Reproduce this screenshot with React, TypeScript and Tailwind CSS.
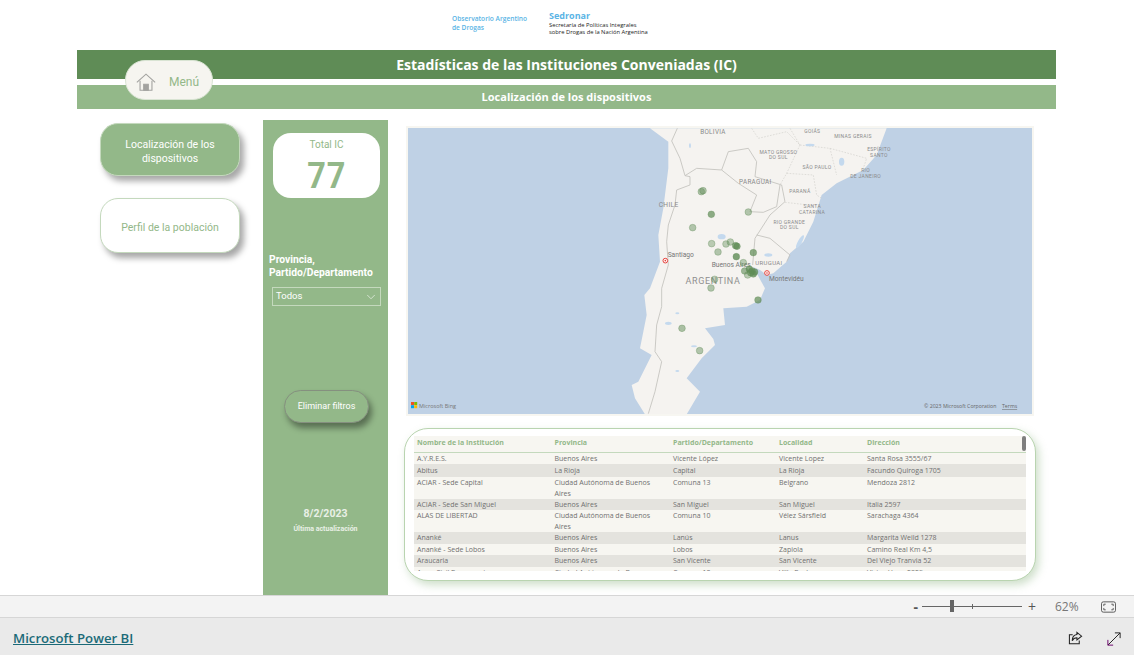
import { ChevronDown } from 'lucide-react'

const segoe = "font-['Open_Sans','Noto_Sans',sans-serif]"
const din = "font-['Roboto','Lato',sans-serif]"

const columns = ['Nombre de la Institución', 'Provincia', 'Partido/Departamento', 'Localidad', 'Dirección']

const rows = [
  { h: 'h-[11px]', cells: ['A.Y.R.E.S.', 'Buenos Aires', 'Vicente López', 'Vicente Lopez', 'Santa Rosa 3555/67'] },
  { h: 'h-[13px] pt-[1px]', alt: true, cells: ['Abitus', 'La Rioja', 'Capital', 'La Rioja', 'Facundo Quiroga 1705'] },
  { h: 'h-[22px]', cells: ['ACIAR - Sede Capital', 'Ciudad Autónoma de Buenos Aires', 'Comuna 13', 'Belgrano', 'Mendoza 2812'] },
  { h: 'h-[11px]', alt: true, cells: ['ACIAR - Sede San Miguel', 'Buenos Aires', 'San Miguel', 'San Miguel', 'Italia 2597'] },
  { h: 'h-[22px]', cells: ['ALAS DE LIBERTAD', 'Ciudad Autónoma de Buenos Aires', 'Comuna 10', 'Vélez Sársfield', 'Sarachaga 4364'] },
  { h: 'h-[12px]', alt: true, cells: ['Ananké', 'Buenos Aires', 'Lanús', 'Lanus', 'Margarita Weild 1278'] },
  { h: 'h-[11px]', cells: ['Ananké - Sede Lobos', 'Buenos Aires', 'Lobos', 'Zapiola', 'Camino Real Km 4,5'] },
  { h: 'h-[12px]', alt: true, cells: ['Araucaria', 'Buenos Aires', 'San Vicente', 'San Vicente', 'Del Viejo Tranvia 52'] },
  { h: 'h-[22px]', cells: ['Asoc. Civil Reencuentros', 'Ciudad Autónoma de Buenos Aires', 'Comuna 10', 'Villa Real', 'Victor Hugo 2829'] },
]

// dots in zoomed-crop coordinates: x, y, dark
const dots: [number, number, number][] = [
  [304, 200, 0.45], [309, 197, 0.45], [334, 268, 0.7], [445, 261, 0.45], [278, 308, 0.45],
  [335, 356, 0.4], [378, 357, 0.4], [391, 351, 0.4], [407, 362, 0.7], [411, 364, 0.75],
  [354, 381, 0.45], [460, 383, 0.7], [409, 395, 0.8], [430, 413, 0.4], [434, 438, 0.6],
  [443, 450, 0.4], [448, 432, 0.75], [456, 438, 0.75], [460, 447, 0.75], [464, 441, 0.75],
  [452, 443, 0.7], [344, 463, 0.35], [333, 489, 0.45], [474, 525, 0.7], [246, 610, 0.5], [299, 677, 0.45],
]

const labels: [string, number, number, number][] = [
  ['BOLIVIA', 339, 26, 19], ['GOIÁS', 637, 25, 15], ['MINAS GERAIS', 759, 40, 15],
  ['ESPÍRITO', 837, 79, 15], ['SANTO', 837, 95, 15], ['MATO GROSSO', 535, 86, 15], ['DO SUL', 535, 103, 15],
  ['SÃO PAULO', 651, 133, 15], ['RIO', 797, 142, 15], ['DE JANEIRO', 797, 159, 15], ['PARAGUAI', 466, 176, 19],
  ['PARANÁ', 600, 203, 15], ['SANTA', 637, 250, 15], ['CATARINA', 636, 266, 15], ['CHILE', 206, 246, 20],
  ['RIO GRANDE', 568, 296, 15], ['DO SUL', 568, 313, 15], ['URUGUAI', 507, 421, 18],
]

function MapVisual() {
  return (
    <svg viewBox="0 0 624 286" className="block w-full h-full">
      <rect width="624" height="286" fill="#bfd1e5" />
      <g transform="translate(192 -3) scale(0.3333)">
        <path
          d="M150 10 L205 50 L205 130 L190 250 L175 330 L180 410 L150 490 L133 510 L140 570 L130 620 L120 670 L155 690 L115 770 L95 780 L105 820 L135 868 L260 868 L300 800 L260 760 L305 700 L345 660 L340 642 L315 610 L375 600 L370 550 L440 545 L480 525 L495 490 L470 445 L458 425 L480 435 L500 450 L520 445 L560 410 L570 385 L610 350 L640 290 L665 210 L710 175 L790 135 L830 90 L860 10 Z"
          fill="#f5f3f0"
        />
        <g fill="none" stroke="#c2c0bc" strokeWidth="2.5" strokeLinejoin="round">
          <path d="M232 10 L215 48 L240 100 L255 152 L270 155 L270 180 L230 195 L225 240 L205 300 L200 350 L205 420 L185 490 L185 545 L170 600 L165 680 L185 710 L165 800 L145 866" />
          <path d="M255 152 L290 130 L365 135 L385 80 L445 70 L470 110 L465 155 L545 180 L555 230 L510 270 L465 340 L458 420" />
          <path d="M365 135 L415 175 L470 210 L450 260 L490 262 L530 245 L540 180" />
          <path d="M470 330 L510 340 L570 390 L560 410" />
        </g>
        <g fill="none" stroke="#d2d0cc" strokeWidth="2" strokeDasharray="5 4">
          <path d="M455 10 L475 40 L560 20 L600 60 L560 145 L540 180" />
          <path d="M560 145 L640 150 L650 210 L665 220" />
          <path d="M555 232 L670 245" />
          <path d="M600 60 L690 70 L710 150" />
          <path d="M690 70 L800 100 L790 130" />
          <path d="M570 10 L600 60" />
        </g>
        <g fill="#c4d9ee">
          <ellipse cx="365" cy="335" rx="12" ry="8" />
          <ellipse cx="600" cy="350" rx="6" ry="22" transform="rotate(30 600 350)" />
          <ellipse cx="505" cy="390" rx="12" ry="5" />
          <ellipse cx="725" cy="110" rx="8" ry="12" />
          <ellipse cx="630" cy="60" rx="14" ry="4" />
          <ellipse cx="205" cy="595" rx="10" ry="5" />
          <ellipse cx="282" cy="664" rx="9" ry="3" />
          <ellipse cx="270" cy="62" rx="3" ry="7" />
          <ellipse cx="232" cy="565" rx="6" ry="3" />
          <ellipse cx="232" cy="738" rx="6" ry="3" />
        </g>
        {labels.map(([text, x, y, size]) => (
          <text key={text + x} x={x} y={y} fontSize={size} textAnchor="middle" fill="#8a8a8a" fontFamily="Roboto, sans-serif" letterSpacing="1">
            {text}
          </text>
        ))}
        <text x="339" y="476" fontSize="27" textAnchor="middle" fill="#8f8f8f" fontFamily="Roboto, sans-serif" letterSpacing="2">ARGENTINA</text>
        <text x="203" y="395" fontSize="20" fill="#777" fontFamily="Roboto, sans-serif">Santiago</text>
        <text x="335" y="425" fontSize="20" fill="#777" fontFamily="Roboto, sans-serif">Buenos Aires</text>
        <text x="507" y="467" fontSize="20" fill="#777" fontFamily="Roboto, sans-serif">Montevidéu</text>
        {[[196, 407], [501, 444]].map(([x, y]) => (
          <g key={x}>
            <circle cx={x} cy={y} r="7" fill="#fff" stroke="#e5403a" strokeWidth="3" />
            <circle cx={x} cy={y} r="2.5" fill="#e5403a" />
          </g>
        ))}
        {dots.map(([x, y, o], i) => (
          <circle key={i} cx={x} cy={y} r="10" fill="#5f8c56" fillOpacity={o} stroke="#5f8c56" strokeOpacity="0.7" strokeWidth="1.5" />
        ))}
      </g>
      <g transform="translate(3 274)">
        <rect width="3" height="3" fill="#f25022" />
        <rect x="3.2" width="3" height="3" fill="#7fba00" />
        <rect y="3.2" width="3" height="3" fill="#00a4ef" />
        <rect x="3.2" y="3.2" width="3" height="3" fill="#ffb900" />
      </g>
      <text x="11" y="280" fontSize="5.5" fill="#777" fontFamily="Open Sans, sans-serif">Microsoft Bing</text>
      <text x="516" y="280" fontSize="5.2" fill="#666" fontFamily="Open Sans, sans-serif">© 2023 Microsoft Corporation</text>
      <text x="594" y="280" fontSize="5.2" fill="#666" fontFamily="Open Sans, sans-serif" textDecoration="underline">Terms</text>
    </svg>
  )
}

function DataTable() {
  return (
    <div className={`relative mx-[9px] mt-[6px] h-[135px] overflow-hidden bg-[#f7f6f1] ${segoe}`}>
      <div className="grid h-[17px] grid-cols-[137.5px_118.5px_106px_88px_1fr] items-center border-b border-[#c4d9bd] pb-[1px] pl-[3px] text-[7px] font-bold text-[#93b889]">
        {columns.map((c) => (
          <div key={c}>{c}</div>
        ))}
      </div>
      {rows.map((row) => (
        <div
          key={row.cells[0]}
          className={`grid grid-cols-[137.5px_118.5px_106px_88px_1fr] overflow-hidden pl-[3px] text-[7px] leading-[11px] text-[#707070] ${row.h} ${row.alt ? 'bg-[#e4e3de]' : ''}`}
        >
          {row.cells.map((c, i) => (
            <div key={i} className="pr-[14px]">{c}</div>
          ))}
        </div>
      ))}
      <div className="absolute right-0 top-0 h-[15px] w-[4px] rounded-sm bg-[#7f7f7f]" />
    </div>
  )
}

function HomeIcon() {
  return (
    <svg viewBox="0 0 24 24" className="h-[22px] w-[22px]" fill="none" stroke="#a3a3a0" strokeWidth="1.2">
      <path d="M2 12.5L12 3.5L22 12.5" />
      <path d="M5.5 10.5V21H18.5V10.5" />
      <path d="M9.5 21V14.5H14.5V21Z" fill="#a3a3a0" />
    </svg>
  )
}

export default function App() {
  return (
    <div className="relative h-[655px] w-[1134px] overflow-hidden bg-white">
      <div className={`flex h-[50px] items-start pl-[452px] pt-[11px] ${segoe}`}>
        <div className="mt-[3px] w-[97px] text-[6.6px] font-semibold leading-[9px] text-[#5ab4e5]">
          Observatorio Argentino
          <br />
          de Drogas
        </div>
        <div className="leading-none">
          <div className="text-[9px] font-bold leading-[10px] text-[#5ab4e5]">Sedronar</div>
          <div className="mt-[1px] text-[5.8px] leading-[7px] text-[#222]">
            Secretaría de Políticas Integrales
            <br />
            sobre Drogas de la Nación Argentina
          </div>
        </div>
      </div>

      <div className="relative ml-[77px] w-[979px]">
        <div className={`flex h-[29px] items-center justify-center bg-[#5f8c56] text-[14px] font-bold text-white ${segoe}`}>
          Estadísticas de las Instituciones Conveniadas (IC)
        </div>
        <div className={`mt-[6px] flex h-[24px] items-center justify-center bg-[#93b889] text-[11px] font-bold text-white ${segoe}`}>
          Localización de los dispositivos
        </div>
        <div className={`absolute left-[48px] top-[10px] flex h-[40px] w-[88px] items-center rounded-[20px] border border-[#d9e4d3] bg-[#f6f5f0] pl-[9px] pt-[3px] text-[12px] text-[#93b889] ${din}`}>
          <HomeIcon />
          <span className="ml-[12px]">Menú</span>
        </div>
      </div>

      <div className="ml-[77px] flex w-[979px]">
        <div className={`w-[186px] pl-[23px] pt-[14px] text-[10.5px] ${din}`}>
          <div className="flex h-[53px] w-[140px] items-center justify-center rounded-[18px] border border-[#c4d9bd] bg-[#93b889] px-[16px] pt-[4px] text-center leading-[14px] text-white shadow-[4px_5px_6px_rgba(0,0,0,0.35)]">
            Localización de los dispositivos
          </div>
          <div className="mt-[22px] flex h-[55px] w-[140px] items-center justify-center rounded-[18px] border border-[#c4d9bd] bg-white pt-[5px] text-[#93b889] shadow-[4px_5px_6px_rgba(0,0,0,0.35)]">
            Perfil de la población
          </div>
        </div>

        <div className={`mt-[11px] flex h-[475px] w-[125px] flex-col bg-[#93b889] ${din}`}>
          <div className="mx-[10px] mt-[13px] flex h-[65px] w-[107px] flex-col items-center rounded-[18px] bg-white pt-[5px]">
            <div className="text-[10px] leading-[14px] text-[#93b889]">Total IC</div>
            <div className="mt-[4px] scale-x-90 text-[36px] font-bold leading-[40px] tracking-[1px] text-[#93b889]">77</div>
          </div>
          <div className="ml-[6px] mt-[55px] text-[10.3px] font-bold leading-[13px] text-white">
            Provincia,
            <br />
            Partido/Departamento
          </div>
          <div className="ml-[9px] mt-[8px] flex h-[19px] w-[109px] items-center justify-between border border-[#c4d9bd] pl-[3px] pr-[2px] text-[9.5px] text-white">
            Todos
            <ChevronDown size={14} strokeWidth={1} />
          </div>
          <div className="ml-[21px] mt-[84px] flex h-[33px] w-[85px] items-center justify-center rounded-[17px] border border-[#85907f] bg-[#93b889] text-[9px] text-white shadow-[3px_5px_6px_rgba(0,0,0,0.4)]">
            Eliminar filtros
          </div>
          <div className="mt-[84px] text-center text-[10.5px] font-bold leading-[14px] text-[#e9f0e6]">8/2/2023</div>
          <div className="mt-[3px] text-center text-[7px] font-bold leading-[10px] text-[#e9f0e6]">Última actualización</div>
        </div>

        <div className="ml-[16px] w-[632px]">
          <div className="ml-[2px] mt-[17px] h-[290px] w-[628px] border-2 border-[#f7f6f1]">
            <MapVisual />
          </div>
          <div className="mt-[12px] h-[153px] rounded-[24px] border border-[#b9d4b0] bg-white pt-[1px] shadow-[3px_4px_8px_rgba(147,184,137,0.45)]">
            <DataTable />
          </div>
        </div>
      </div>

      <div className={`absolute inset-x-0 bottom-[37px] flex h-[23px] items-center justify-end border-y border-[#d6d6d6] bg-[#f3f3f3] pr-[18px] text-[#555] ${segoe}`}>
        <span className="text-[14px] font-bold leading-none">-</span>
        <div className="relative ml-[4px] h-px w-[100px] bg-[#666]">
          <div className="absolute left-[28px] top-[-6px] h-[12px] w-[4px] bg-[#666]" />
          <div className="absolute left-[50px] top-[-2px] h-[5px] w-px bg-[#666]" />
        </div>
        <span className="ml-[6px] text-[14px] leading-none">+</span>
        <span className="ml-[19px] w-[24px] text-[12px] text-[#777]">62%</span>
        <svg viewBox="0 0 16 12" className="ml-[22px] h-[12px] w-[15px]" fill="none" stroke="#555">
          <rect x="0.5" y="0.5" width="15" height="11" rx="2" />
          <path d="M3 5V3h2M11 3h2v2M13 7v2h-2M5 9H3V7" />
        </svg>
      </div>

      <div className={`absolute inset-x-0 bottom-0 flex h-[37px] items-center justify-between bg-[#eaeaea] pl-[13px] pr-[13px] pt-[4px] ${segoe}`}>
        <span className="text-[13.2px] font-semibold text-[#1b6a78] underline">Microsoft Power BI</span>
        <div className="flex items-center gap-[24px]">
          <svg viewBox="0 0 16 16" className="h-[15px] w-[15px]" fill="none" stroke="#222" strokeWidth="1.1">
            <path d="M12 10v3.5H1.5V4H5" />
            <path d="M9.5 1.5L14.5 5.5L9.5 9.5V7.3C7 7.3 5.5 8.3 4.5 10.5C4.5 7 6.5 4.2 9.5 3.8Z" />
          </svg>
          <svg viewBox="0 0 16 16" className="h-[14px] w-[14px]" fill="none" strokeWidth="1.1">
            <path d="M1 15L15 1M9 1h6v6" stroke="#222" />
            <path d="M1 9v6h6" stroke="#6a006a" />
          </svg>
        </div>
      </div>
    </div>
  )
}
